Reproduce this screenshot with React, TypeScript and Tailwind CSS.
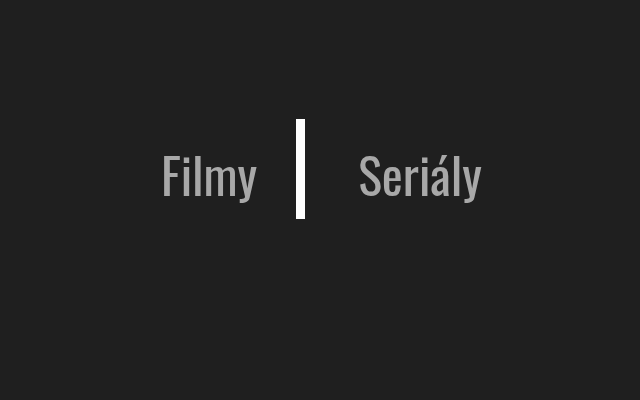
export default function App() {
  return (
    <div className="w-[640px] h-[400px] bg-[#1f1f1f] flex items-center justify-center font-['Oswald',sans-serif] text-[#a8a8a8]">
      <div className="flex items-center -mt-[62px] ml-[3px]">
        <span className="text-[50px] leading-none mt-[7px]">Filmy</span>
        <div className="w-[9px] h-[100px] bg-white ml-[39px] mr-[53px]" />
        <span className="text-[50px] leading-none mt-[7px]">Seriály</span>
      </div>
    </div>
  );
}
